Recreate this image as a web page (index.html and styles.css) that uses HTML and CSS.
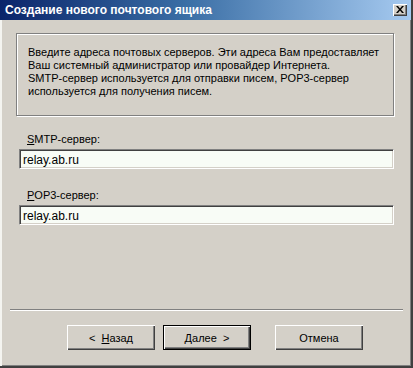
FILE: index.html
```html
<!DOCTYPE html>
<html lang="ru">
<head>
    <meta charset="UTF-8">
    <title>Создание нового почтового ящика</title>
    <link rel="stylesheet" href="styles.css">
</head>
<body>
    <div class="window">
        <div class="titlebar">
            <span class="title">Создание нового почтового ящика</span>
            <span class="close-btn">
                <svg width="8" height="7" viewBox="0 0 8 7">
                    <path d="M0 0h2l2 2.5L6 0h2L5 3.5 8 7H6L4 4.5 2 7H0l3-3.5z" fill="#000"/>
                </svg>
            </span>
        </div>

        <div class="content">
            <div class="intro">
                Введите адреса почтовых серверов. Эти адреса Вам предоставляет<br>
                Ваш системный администратор или провайдер Интернета.<br>
                SMTP-сервер используется для отправки писем, POP3-сервер<br>
                используется для получения писем.
            </div>

            <div class="field">
                <label class="field-label"><u>S</u>MTP-сервер:</label>
                <div class="text-input">relay.ab.ru</div>
            </div>

            <div class="field">
                <label class="field-label"><u>P</u>OP3-сервер:</label>
                <div class="text-input">relay.ab.ru</div>
            </div>
        </div>

        <div class="separator"></div>

        <div class="buttons">
            <button class="btn">&lt;&nbsp; <u>Н</u>азад</button>
            <button class="btn btn-default"><u>Д</u>алее&nbsp; &gt;</button>
            <button class="btn btn-cancel">Отмена</button>
        </div>
    </div>
</body>
</html>
```

FILE: styles.css
```css
body {
    margin: 0;
    font-family: "Liberation Sans", Arial, sans-serif;
    font-size: 11px;
    color: #000;
    background: #d4d0c8;
}
.window {
    width: 413px;
    height: 368px;
    box-sizing: border-box;
    background: #d4d0c8;
    border-bottom: 2px solid #404040;
    border-right: 2px solid #404040;
    box-shadow: inset 2px 0 0 #f4f4f0, inset -1px -1px 0 #808080;
    display: flex;
    flex-direction: column;
}
.titlebar {
    height: 20px;
    display: flex;
    align-items: center;
    justify-content: space-between;
    padding: 0 4px 0 5px;
    background: linear-gradient(to right, #0a246a, #3a6ea5 45%, #a6caf0);
}
.title {
    color: #fff;
    font-weight: bold;
    font-size: 12px;
}
.close-btn {
    width: 14px;
    height: 12px;
    margin-top: -1px;
    background: #d4d0c8;
    box-shadow: inset 1px 1px 0 #fff, inset -1px -1px 0 #404040, inset -2px -2px 0 #808080;
    display: flex;
    align-items: center;
    justify-content: center;
}
.content {
    padding: 13px 17px 0 16px;
}
.intro {
    height: 83px;
    box-sizing: border-box;
    padding: 12px 11px 0;
    line-height: 13px;
    white-space: nowrap;
    border: 1px solid #808080;
    box-shadow: inset 1px 1px 0 #fff, 1px 1px 0 #fff;
}
.field {
    margin-top: 17px;
}
.field + .field {
    margin-top: 20px;
}
.field-label {
    display: block;
    padding-left: 11px;
    line-height: 13px;
    margin-bottom: 3px;
}
.text-input {
    margin-left: 3px;
    width: 375px;
    height: 20px;
    box-sizing: border-box;
    padding: 3px 0 0 3px;
    background: #f8fcf6;
    border-top: 1px solid #808080;
    border-left: 1px solid #808080;
    border-bottom: 1px solid #fff;
    border-right: 1px solid #fff;
    box-shadow: inset 1px 1px 0 #404040, inset -1px -1px 0 #d4d0c8;
    font-size: 12px;
}
.separator {
    margin: 84px 8px 0 10px;
    height: 1px;
    background: #808080;
    border-bottom: 1px solid #fff;
}
.buttons {
    display: flex;
    padding: 14px 0 0 67px;
    gap: 8px;
}
.btn {
    width: 88px;
    height: 25px;
    font-family: inherit;
    font-size: 11px;
    background: #d4d0c8;
    border: none;
    padding: 0;
    box-shadow: inset 1px 1px 0 #fff, inset -1px -1px 0 #404040, inset -2px -2px 0 #808080;
}
.btn-default {
    border: 1px solid #000;
}
.btn-cancel {
    margin-left: 16px;
}
```
